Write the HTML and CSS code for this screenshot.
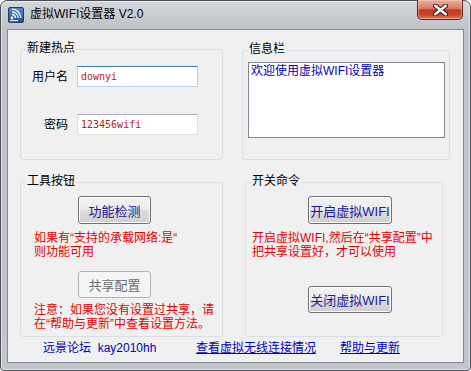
FILE: index.html
```html
<!DOCTYPE html>
<html lang="zh-CN">
<head>
    <meta charset="UTF-8">
    <meta name="viewport" content="width=device-width, initial-scale=1.0">
    <title>虚拟WIFI设置器 V2.0</title>
    <link rel="stylesheet" href="styles.css">
</head>
<body>
    <div class="window">
        <div class="titlebar">
            <svg class="app-icon" width="16" height="16" viewBox="0 0 16 16">
                <defs>
                    <linearGradient id="ig" x1="0" y1="0" x2="0" y2="1">
                        <stop offset="0" stop-color="#4f8fd0"/>
                        <stop offset="1" stop-color="#1d4f8c"/>
                    </linearGradient>
                </defs>
                <rect x="0.5" y="0.5" width="15" height="15" rx="1.5" fill="url(#ig)" stroke="#1b3f6e"/>
                <circle cx="4" cy="11" r="1.4" fill="#fff"/>
                <path d="M4 7.5 A3.5 3.5 0 0 1 7.5 11" fill="none" stroke="#fff" stroke-width="1.3"/>
                <path d="M4 4.8 A6.2 6.2 0 0 1 10.2 11" fill="none" stroke="#fff" stroke-width="1.3"/>
                <path d="M4 2.2 A8.8 8.8 0 0 1 12.8 11" fill="none" stroke="#fff" stroke-width="1.3"/>
                <rect x="2" y="13" width="8" height="1.2" fill="#dfe9f5"/>
            </svg>
            <span class="title">虚拟WIFI设置器 V2.0</span>
            <div class="close-btn">
                <svg width="15" height="12" viewBox="0 0 15 12">
                    <path d="M2.2 1.8 L12.8 10.2 M12.8 1.8 L2.2 10.2" stroke="#3a1812" stroke-width="4.6" stroke-linecap="round"/>
                    <path d="M2.2 1.8 L12.8 10.2 M12.8 1.8 L2.2 10.2" stroke="#fff" stroke-width="2.5" stroke-linecap="round"/>
                </svg>
            </div>
        </div>

        <div class="client">
            <div class="groups">
                <div class="group hotspot">
                    <span class="group-title">新建热点</span>
                    <div class="form">
                        <label for="user">用户名</label>
                        <input type="text" id="user" class="field focused" value="downyi">
                        <label for="pass">密码</label>
                        <input type="text" id="pass" class="field" value="123456wifi">
                    </div>
                </div>

                <div class="group info">
                    <span class="group-title">信息栏</span>
                    <div class="info-box">欢迎使用虚拟WIFI设置器</div>
                </div>

                <div class="group tools">
                    <span class="group-title">工具按钮</span>
                    <button class="btn btn-tool">功能检测</button>
                    <p class="hint">如果有“支持的承载网络:是“<br>则功能可用</p>
                    <button class="btn btn-tool btn-share" disabled>共享配置</button>
                    <p class="hint hint-note">注意：如果您没有设置过共享，请<br>在“帮助与更新”中查看设置方法。</p>
                </div>

                <div class="group switch">
                    <span class="group-title">开关命令</span>
                    <button class="btn btn-wifi">开启虚拟WIFI</button>
                    <p class="hint">开启虚拟WIFI,然后在“共享配置”中<br>把共享设置好，才可以使用</p>
                    <button class="btn btn-wifi btn-off">关闭虚拟WIFI</button>
                </div>
            </div>

            <div class="footer">
                <span class="forum">远景论坛&nbsp;&nbsp;kay2010hh</span>
                <a href="#" class="link link-view">查看虚拟无线连接情况</a>
                <a href="#" class="link">帮助与更新</a>
            </div>
        </div>
    </div>
</body>
</html>
```

FILE: styles.css
```css
* {
    box-sizing: border-box;
}
body {
    margin: 0;
    font-family: "Liberation Sans", "Noto Sans CJK SC", sans-serif;
    font-size: 12px;
    background: #fff;
}
.window {
    width: 471px;
    height: 371px;
    display: flex;
    flex-direction: column;
    padding: 0 6px 7px 6px;
    border: 1px solid #4a4f55;
    border-radius: 7px 7px 4px 4px;
    background: linear-gradient(to bottom, #d3d6da 0, #bfc3c8 28px, #c2c6cb 100%);
    box-shadow: inset 0 0 0 1px rgba(255, 255, 255, 0.55);
}
.titlebar {
    height: 28px;
    display: flex;
    align-items: flex-start;
    flex-shrink: 0;
}
.app-icon {
    margin: 6px 0 0 1px;
}
.title {
    margin: 6px 0 0 6px;
    line-height: 14px;
    color: #000;
}
.close-btn {
    margin: -1px 1px 0 auto;
    width: 46px;
    height: 20px;
    display: flex;
    align-items: center;
    justify-content: center;
    border: 1px solid #5e261c;
    border-top: none;
    border-radius: 0 0 5px 5px;
    background: linear-gradient(to bottom, #eab0a0 0%, #d9785f 45%, #c03a1d 52%, #c6462a 78%, #dc7f5a 100%);
    box-shadow: inset 0 0 0 1px rgba(255, 210, 190, 0.45);
}
.client {
    flex: 1;
    border: 1px solid #868b92;
    background: #f0f0f0;
}
.groups {
    display: grid;
    grid-template-columns: 203px 208px;
    grid-template-rows: 111px 155px;
    column-gap: 19px;
    row-gap: 22px;
    padding: 19px 0 0 12px;
}
.group {
    position: relative;
    border: 1px solid #d5dfe5;
    border-radius: 3px;
}
.group-title {
    position: absolute;
    top: -9px;
    left: 5px;
    padding: 0 1px;
    line-height: 14px;
    background: #f0f0f0;
    color: #000;
}
.info {
    height: 110px;
    margin-top: 1px;
}
.switch {
    width: 198px;
    margin-left: 3px;
}
.form {
    display: grid;
    grid-template-columns: 36px 121px;
    grid-auto-rows: 21px;
    column-gap: 9px;
    row-gap: 27px;
    align-items: center;
    padding: 16px 0 0 11px;
}
.form label {
    text-align: right;
    line-height: 14px;
    white-space: nowrap;
}
.field {
    width: 121px;
    height: 21px;
    margin: 0;
    padding: 0 3px;
    border: 1px solid #dbdfe6;
    border-top-color: #abadb3;
    background: #fff;
    color: #c01818;
    font-family: "DejaVu Sans Mono", monospace;
    font-size: 10px;
    outline: none;
}
.field.focused {
    border-color: #b5cfe7;
    border-top-color: #3d7bad;
}
.info-box {
    width: 197px;
    height: 76px;
    margin: 11px 0 0 5px;
    padding: 1px 2px;
    border: 1px solid #828790;
    background: #fff;
    color: #0000b4;
    line-height: 14px;
}
.btn {
    display: block;
    height: 28px;
    padding: 0;
    margin: 13px 0 0 0;
    border: 1px solid #707070;
    border-radius: 3px;
    background: linear-gradient(to bottom, #f2f2f2 0%, #ebebeb 50%, #dddddd 51%, #cfcfcf 100%);
    box-shadow: inset 0 0 0 1px #fcfcfc;
    color: #1a1a9c;
    font-family: inherit;
    font-size: 13px;
    cursor: pointer;
}
.btn:disabled {
    border-color: #adb2b5;
    background: #f4f4f4;
    box-shadow: none;
    color: #6d6d6d;
    cursor: default;
}
.btn-tool {
    width: 73px;
    margin-left: 57px;
}
.btn-share {
    height: 27px;
    margin-top: 12px;
}
.btn-wifi {
    width: 84px;
    margin-left: 62px;
}
.btn-off {
    height: 27px;
    margin-top: 27px;
}
.hint {
    margin: 7px 0 0 0;
    padding-left: 13px;
    color: #e80000;
    line-height: 14px;
    white-space: nowrap;
}
.hint-note {
    margin-top: 5px;
}
.switch .hint {
    padding-left: 6px;
}
.footer {
    display: flex;
    margin-top: 4px;
    padding-left: 35px;
    line-height: 14px;
}
.forum {
    width: 153px;
    color: #0000c0;
}
.link {
    color: #0000c0;
    text-decoration: underline;
}
.link-view {
    width: 144px;
}
```
